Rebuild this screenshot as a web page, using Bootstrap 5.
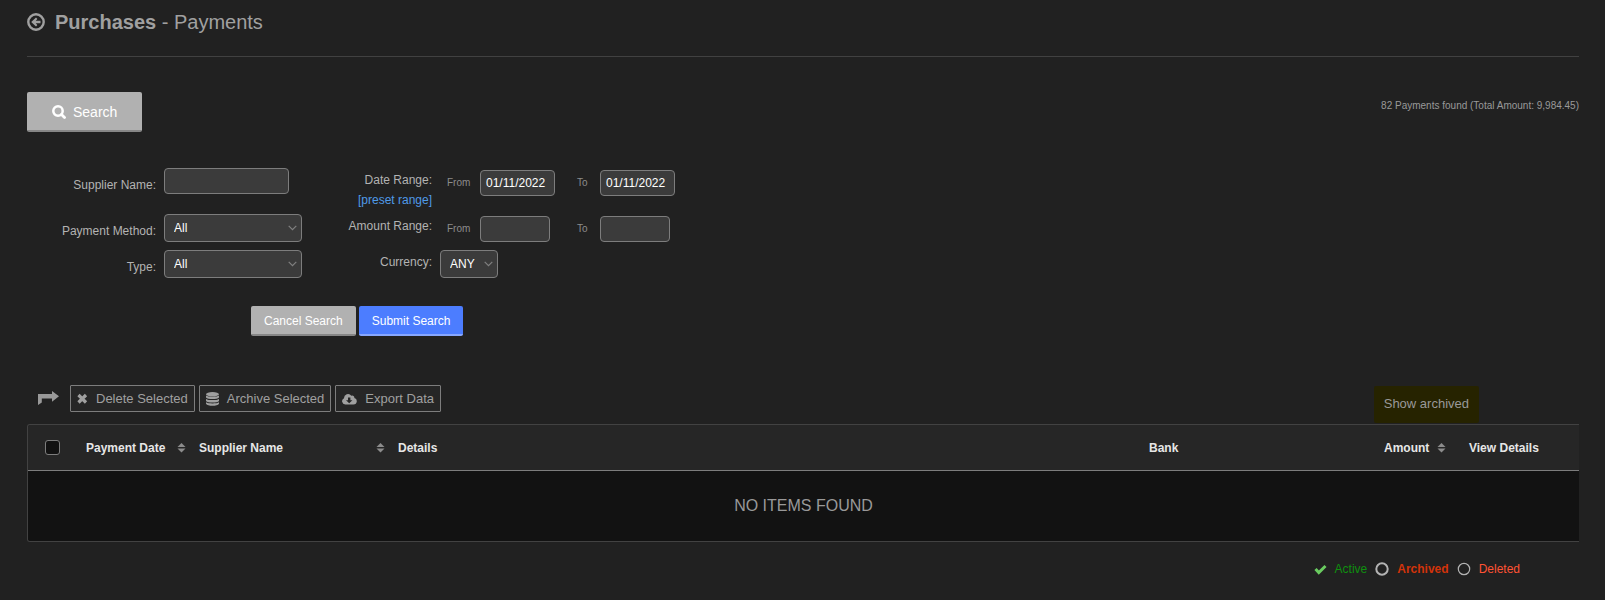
<!DOCTYPE html>
<html lang="en">
<head>
<meta charset="utf-8">
<meta name="viewport" content="width=device-width, initial-scale=1">
<title>Purchases - Payments</title>
<link href="https://cdn.jsdelivr.net/npm/bootstrap@5.3.0/dist/css/bootstrap.min.css" rel="stylesheet">
<style>
body { background: #212121; color: #b3b3b3; font-family: "Liberation Sans", Arial, sans-serif; font-size: 12px; line-height: 20px; }
svg { fill: currentColor; flex: none; display: block; }
.page { padding: 8px 26px 16px 27px; }
.page-title { font-size: 20px; line-height: 28px; color: #a0a0a0; margin: 0; gap: 10px; }
.page-title a { color: inherit; }
.rule { border-bottom: 1px solid #414141; height: 21px; margin-bottom: 35px; }
.btn-grey, .btn-blue { border: 0; border-radius: 2px; color: #fff; font-size: 12px; line-height: 20px; padding: 5px 13px 3px; height: 30px; }
.btn-grey, .btn-grey:hover { background: #b1b1b1; color: #fff; border-bottom: 2px solid #868686; }
.btn-blue, .btn-blue:hover { background: #4c7dff; color: #fff; border-bottom: 2px solid #87a7ff; }
.btn-search { font-size: 14px; height: 40px; padding: 2px 25px 0; gap: 7px; }
.found { font-size: 10px; color: #999; margin-top: 1px; line-height: 26px; }
.filters { display: grid; grid-template-columns: 129px 138px 122px auto; grid-template-rows: 46px 36px 28px; column-gap: 8px; justify-content: start; margin-top: 36px; }
.filters > label, .filters > .range-label { text-align: right; }
.left-label { padding-top: 7px; }
.right-label { padding-top: 2px; }
.box, .pick { background-color: #3b3b3b; border: 1px solid #7d7d7d; border-radius: 4px; color: #fff; font-size: 12px; line-height: 20px; padding: 2px 5px; height: 26px; }
.box-name { width: 125px; }
.box-date { width: 75px; }
.box-sum { width: 70px; }
.pick { appearance: none; height: 28px; padding: 0 9px; width: 138px; background-image: url("data:image/svg+xml,%3Csvg xmlns='http://www.w3.org/2000/svg' width='9' height='6'%3E%3Cpath d='M.7.8 4.5 4.6 8.3.8' fill='none' stroke='%23808080' stroke-width='1.2'/%3E%3C/svg%3E"); background-repeat: no-repeat; background-position: right 4px center; }
.pick-small { width: 58px; }
.range { display: grid; grid-template-columns: 33px 97px 23px auto; align-items: center; height: 26px; padding-left: 7px; margin-top: 2px; font-size: 10px; color: #8c8c8c; }
.preset { color: #4f9ae8; text-decoration: none; }
.actions { margin: 28px 0 0 224px; gap: 3px; }
.toolbar { margin-top: 49px; height: 39px; padding-left: 11px; gap: 4px; font-size: 13px; }
.turn { margin: 6px 7px 0 0; color: #999; }
.btn-tool, .btn-tool:hover { border: 1px solid #7d7d7d; border-radius: 1px; background: #262626; color: #a0a0a0; font-size: 13px; line-height: 20px; height: 27px; padding: 0 6px; }
.archived-toggle { background: #262300; color: #999; text-decoration: none; margin: 1px 100px 0 auto; padding: 8px 10px 9px; font-size: 13px; border-radius: 2px; }
.frame { border: 1px solid #424242; border-right: 0; border-radius: 3px 0 0 3px; overflow: hidden; }
.list { width: 100%; table-layout: fixed; border-collapse: separate; border-spacing: 0; }
.list th { background: #262626; color: #e6e6e6; height: 46px; padding: 0 8px; border-bottom: 1px solid #7d7d7d; white-space: nowrap; }
.list td { background: #121212; color: #999; height: 70px; padding: 0; font-size: 16px; text-align: center; }
.list .form-check-input { display: block; width: 15px; height: 15px; margin: 0 0 0 9px; background-color: #121212; border: 1px solid #7d7d7d; border-radius: 3px; }
.w-check { width: 50px; } .w-date { width: 113px; } .w-name { width: 199px; } .w-bank { width: 235px; } .w-sum { width: 85px; } .w-view { width: 118px; }
.sorter { color: #8c8c8c; margin-right: -3px; }
.legend-row { margin: 17px 59px 0 0; }
.ok { color: #6acb60; } .active-text { color: #0f8f0f; } .arch-text { color: #d2330a; font-weight: bold; } .del-text { color: #ff5233; }
</style>
</head>
<body>
<main class="page">
  <h1 class="page-title d-flex align-items-center">
    <a href="#" aria-label="Back"><svg width="18" height="18" viewBox="0 0 18 18"><circle cx="9" cy="9" r="7.700" fill="none" stroke="currentColor" stroke-width="2.400"/><path d="M4.200 9 9 4.600l1.400 1.400-1.700 1.800h4.800v2.500H8.700l1.700 1.700L9 13.400z"/></svg></a>
    <span><b>Purchases</b> - Payments</span>
  </h1>
  <div class="rule"></div>

  <div class="d-flex justify-content-between align-items-start">
    <button type="button" class="btn btn-grey btn-search d-flex align-items-center"><svg width="14" height="14" viewBox="0 0 14 14"><circle cx="6" cy="6" r="4.700" fill="none" stroke="currentColor" stroke-width="2.500"/><path d="m9.500 9.500 3 3" stroke="currentColor" stroke-width="2.800" stroke-linecap="round"/></svg>Search</button>
    <div class="found">82 Payments found (Total Amount: 9,984.45)</div>
  </div>

  <form>
    <div class="filters">
      <label class="left-label" for="supplier">Supplier Name:</label>
      <div><input type="text" id="supplier" class="box box-name d-block"></div>
      <div class="right-label range-label"><label for="date-from">Date Range:</label><br><a href="#" class="preset">[preset range]</a></div>
      <div class="range">
        <label for="date-from">From</label><input type="text" id="date-from" class="box box-date" value="01/11/2022">
        <label for="date-to">To</label><input type="text" id="date-to" class="box box-date" value="01/11/2022">
      </div>
      <label class="left-label" for="method">Payment Method:</label>
      <div><select id="method" class="pick d-block"><option>All</option></select></div>
      <label class="right-label" for="sum-from">Amount Range:</label>
      <div class="range">
        <label for="sum-from">From</label><input type="text" id="sum-from" class="box box-sum">
        <label for="sum-to">To</label><input type="text" id="sum-to" class="box box-sum">
      </div>
      <label class="left-label" for="type">Type:</label>
      <div><select id="type" class="pick d-block"><option>All</option></select></div>
      <label class="right-label" for="currency">Currency:</label>
      <div><select id="currency" class="pick pick-small d-block"><option>ANY</option></select></div>
    </div>
    <div class="actions d-flex">
      <button type="button" class="btn btn-grey">Cancel Search</button>
      <button type="submit" class="btn btn-blue">Submit Search</button>
    </div>
  </form>

  <div class="toolbar d-flex align-items-start">
    <svg class="turn" width="21" height="14" viewBox="0 0 21 14"><path d="M0 14V3h14V0l7 5.300-7 5.400V7.400H3.800v4.200z"/></svg>
    <button type="button" class="btn btn-tool d-flex align-items-center"><svg class="me-2" width="11" height="11" viewBox="0 0 11 11"><path d="m1.500 2 7.500 7.500M9 2 1.500 9.500" stroke="currentColor" stroke-width="3.200"/></svg>Delete Selected</button>
    <button type="button" class="btn btn-tool d-flex align-items-center"><svg class="me-2" width="13" height="14" viewBox="0 0 12 14" preserveAspectRatio="none"><ellipse cx="6" cy="2.200" rx="6" ry="2.200"/><path d="M0 3.600c2 1.600 10 1.600 12 0v2c-1.500 2-10.500 2-12 0zM0 6.900c2 1.600 10 1.600 12 0v2c-1.500 2-10.500 2-12 0zM0 10.200c2 1.600 10 1.600 12 0v1.600c-1.500 2.700-10.500 2.700-12 0z"/></svg>Archive Selected</button>
    <button type="button" class="btn btn-tool d-flex align-items-center"><svg class="me-2" width="15" height="12" viewBox="0 0 15 12"><path fill-rule="evenodd" d="M3.300 11.500A3.300 3.300 0 0 1 2 5.200 4 4 0 0 1 9.300 2.800a2 2 0 0 1 3 2.200 3.300 3.300 0 0 1-.8 6.500zM6 4.500v2.700H4L7.200 10.300l3.200-3.100h-2V4.500z"/></svg>Export Data</button>
    <a href="#" class="archived-toggle">Show archived</a>
  </div>

  <div class="frame">
    <table class="list">
      <thead><tr>
        <th class="w-check"><input type="checkbox" class="form-check-input" aria-label="Select all"></th>
        <th class="w-date"><div class="d-flex align-items-center justify-content-between">Payment Date<svg class="sorter" width="9" height="10" viewBox="0 0 9 10"><path d="M.5 4 4.500 0l4 4zM.5 5.500h8l-4 4z"/></svg></div></th>
        <th class="w-name"><div class="d-flex align-items-center justify-content-between">Supplier Name<svg class="sorter" width="9" height="10" viewBox="0 0 9 10"><path d="M.5 4 4.500 0l4 4zM.5 5.500h8l-4 4z"/></svg></div></th>
        <th>Details</th>
        <th class="w-bank">Bank</th>
        <th class="w-sum"><div class="d-flex align-items-center justify-content-start">Amount<svg class="sorter ms-2" width="9" height="10" viewBox="0 0 9 10"><path d="M.5 4 4.500 0l4 4zM.5 5.500h8l-4 4z"/></svg></div></th>
        <th class="w-view">View Details</th>
      </tr></thead>
      <tbody><tr><td colspan="7">NO ITEMS FOUND</td></tr></tbody>
    </table>
  </div>

  <div class="legend-row d-flex justify-content-end align-items-center gap-2">
    <svg class="ok" width="13" height="11" viewBox="0 0 13 11"><path d="m1.500 5 3.300 3.500L11.500 2" fill="none" stroke="currentColor" stroke-width="3"/></svg>
    <span class="active-text">Active</span>
    <svg width="14" height="14" viewBox="0 0 14 14"><circle cx="7" cy="7" r="5.700" fill="none" stroke="currentColor" stroke-width="2"/></svg>
    <span class="arch-text">Archived</span>
    <svg width="14" height="14" viewBox="0 0 14 14"><circle cx="7" cy="7" r="5.700" fill="none" stroke="currentColor" stroke-width="1.200"/></svg>
    <span class="del-text">Deleted</span>
  </div>
</main>
<script src="https://cdn.jsdelivr.net/npm/bootstrap@5.3.0/dist/js/bootstrap.bundle.min.js"></script>
</body>
</html>
